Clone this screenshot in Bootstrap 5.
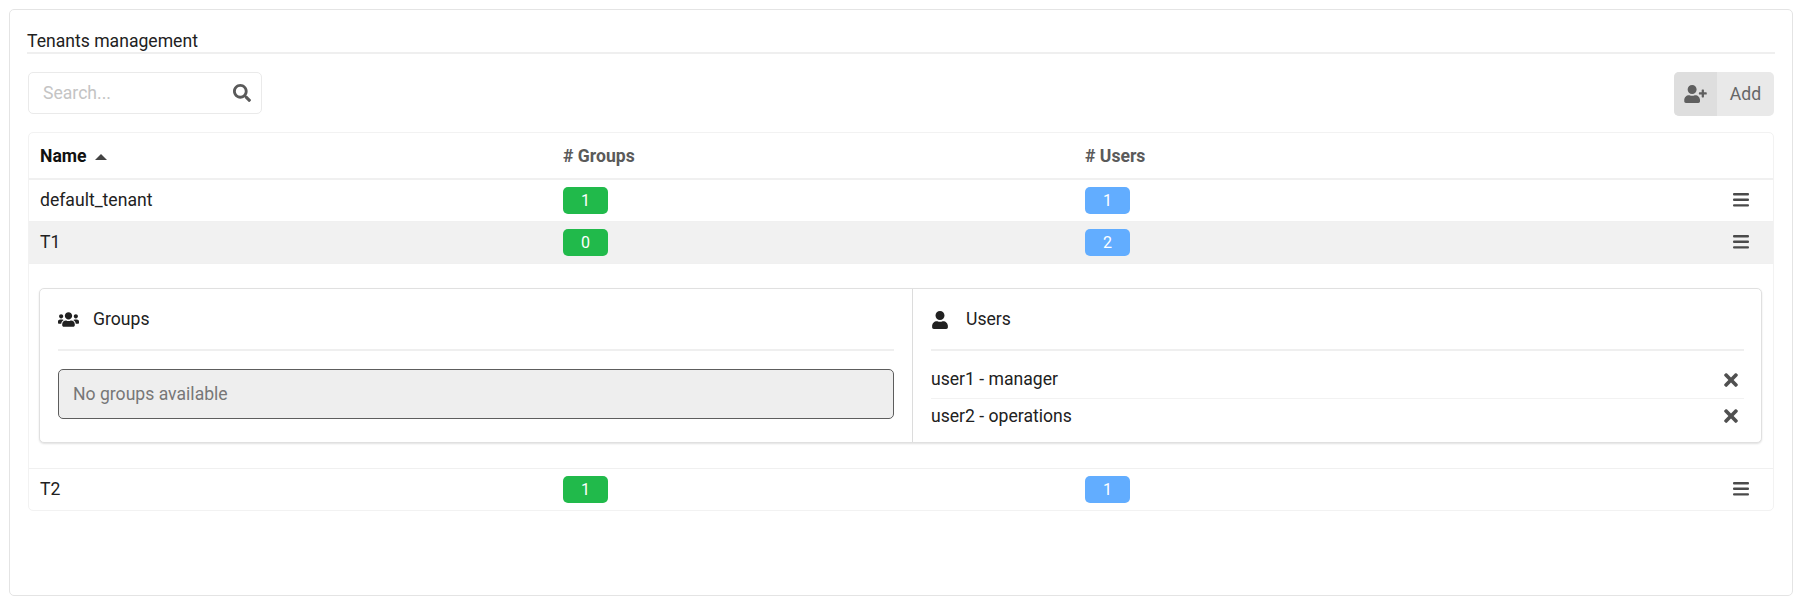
<!DOCTYPE html>
<html lang="en">
  <head>
    <meta charset="UTF-8" />
    <meta name="viewport" content="width=device-width, initial-scale=1.0" />
    <title>Tenants management</title>
    <link
      href="https://cdn.jsdelivr.net/npm/bootstrap@5.3.0/dist/css/bootstrap.min.css"
      rel="stylesheet"
    />
    <style>
      body {
        font-family: Roboto, "Liberation Sans", sans-serif;
        font-size: 17.6px;
        color: #212121;
        background-color: #fff;
      }
      .page-box {
        margin: 9px 8px 0 9px;
        height: 587px;
        padding: 19px 17px 0 17px;
        border: 1px solid #e4e4e4;
        border-radius: 5px;
      }
      .page-title {
        height: 25px;
        line-height: 24px;
        border-bottom: 2px solid #efefef;
      }
      .tools-row {
        margin: 18px 1px 16px 1px;
      }
      .search-box {
        width: 234px;
        height: 42px;
        border: 1px solid #eaeaea;
        border-radius: 5px;
        padding: 0 10px 0 14px;
      }
      .search-box input {
        border: 0;
        outline: 0;
        padding: 0;
        width: 0;
        min-width: 0;
        color: #212121;
      }
      .search-box input::placeholder {
        color: #c4c4c4;
        opacity: 1;
      }
      .search-box svg {
        width: 18px;
        height: 18px;
        flex-shrink: 0;
        fill: #5a5a5a;
      }
      .add-btn {
        height: 44px;
        width: 100px;
        background: #e9e9e9;
        border-radius: 5px;
        overflow: hidden;
        color: #666;
      }
      .add-icon {
        width: 43px;
        height: 100%;
        background: #dedede;
      }
      .add-icon svg {
        width: 23px;
        height: 18px;
        fill: #5f5f5f;
      }
      .tenant-frame {
        margin: 0 1px;
        border: 1px solid #f2f2f2;
        border-radius: 5px;
        overflow: hidden;
      }
      .tenant-table {
        table-layout: fixed;
        margin: 0;
        color: #212121;
      }
      .tenant-table th,
      .tenant-table td {
        padding: 0 0 0 11px;
        height: 42px;
        vertical-align: middle;
        border-bottom: 1px solid #f0f0f0;
        font-weight: 400;
      }
      .tenant-table th {
        height: 46px;
        padding-top: 2px;
        font-weight: 700;
        color: #5a5a5a;
        border-bottom-width: 2px;
      }
      .tenant-table th.sorted {
        color: #111;
      }
      .name-col {
        width: 523px;
      }
      .groups-col {
        width: 522px;
      }
      .menu-cell {
        width: 76px;
      }
      .tenant-table tr.open-row td {
        background: #f1f1f1;
        box-shadow: none;
      }
      .tenant-table tr:last-child td {
        border-bottom: 0;
      }
      .sort-mark {
        display: inline-block;
        margin-left: 4px;
        vertical-align: 2px;
        border-left: 6px solid transparent;
        border-right: 6px solid transparent;
        border-bottom: 6px solid #444;
      }
      .count-pill {
        display: block;
        width: 45px;
        height: 27px;
        line-height: 27px;
        border-radius: 5px;
        text-align: center;
        color: #fff;
        font-size: 16px;
      }
      .pill-green {
        background: #21ba4b;
      }
      .pill-blue {
        background: #62adff;
      }
      .menu-icon {
        display: block;
        width: 16px;
        height: 14px;
        margin-left: 25px;
        fill: #4a4a4a;
      }
      .tenant-table td.detail-cell {
        height: 204px;
        padding: 24px 11px 25px 10px;
      }
      .detail-card {
        border: 1px solid #e0e0e0;
        border-radius: 5px;
        box-shadow: 0 1px 2px rgba(0, 0, 0, 0.12);
        height: 155px;
      }
      .detail-side {
        flex: 1 1 0;
        min-width: 0;
        padding: 0 18px;
      }
      .detail-side.left-side {
        flex: 0 0 872px;
      }
      .detail-side + .detail-side {
        border-left: 1px solid #dcdcdc;
        padding: 0 17px 0 18px;
      }
      .detail-head {
        height: 62px;
        padding-top: 2px;
        border-bottom: 2px solid #efefef;
        margin-bottom: 18px;
      }
      .head-icon {
        width: 21px;
        height: 17px;
        margin-right: 14px;
        fill: #212121;
      }
      .user-icon {
        width: 18px;
        height: 18px;
        margin-right: 17px;
      }
      .empty-note {
        height: 50px;
        line-height: 48px;
        padding-left: 14px;
        background: #eeeeee;
        border: 1px solid #5d5d5d;
        border-radius: 5px;
        color: #777;
      }
      .user-line {
        height: 36px;
        margin-top: -7px;
      }
      .user-line + .user-line {
        margin-top: 0;
        border-top: 1px solid #f2f2f2;
      }
      .remove-icon {
        width: 14px;
        height: 20px;
        margin-right: 6px;
        fill: #505050;
      }
    </style>
  </head>
  <body>
    <div class="page-box">
      <div class="page-title">Tenants management</div>

      <div class="tools-row d-flex justify-content-between align-items-start">
        <div class="search-box d-flex align-items-center bg-white">
          <input class="flex-grow-1" type="text" placeholder="Search..." />
          <svg viewBox="0 0 512 512"><path d="M505 442.7L405.3 343c-4.5-4.5-10.6-7-17-7H372c27.6-35.3 44-79.7 44-128C416 93.1 322.9 0 208 0S0 93.1 0 208s93.1 208 208 208c48.3 0 92.7-16.4 128-44v16.3c0 6.4 2.5 12.5 7 17l99.7 99.7c9.4 9.4 24.6 9.4 33.9 0l28.3-28.3c9.4-9.4 9.4-24.6.1-34zM208 336c-70.7 0-128-57.2-128-128 0-70.7 57.2-128 128-128 70.7 0 128 57.2 128 128 0 70.7-57.2 128-128 128z"/></svg>
        </div>
        <div class="add-btn d-flex align-items-center">
          <span class="add-icon d-flex align-items-center justify-content-center">
            <svg viewBox="0 0 640 512"><path d="M624 208h-64v-64c0-8.8-7.2-16-16-16h-32c-8.8 0-16 7.2-16 16v64h-64c-8.8 0-16 7.2-16 16v32c0 8.8 7.2 16 16 16h64v64c0 8.8 7.2 16 16 16h32c8.8 0 16-7.2 16-16v-64h64c8.8 0 16-7.2 16-16v-32c0-8.8-7.2-16-16-16zm-400 48c70.7 0 128-57.3 128-128S294.7 0 224 0 96 57.3 96 128s57.3 128 128 128zm89.6 32h-16.7c-22.2 10.2-46.9 16-72.9 16s-50.6-5.8-72.9-16h-16.7C60.2 288 0 348.2 0 422.4V464c0 26.5 21.5 48 48 48h352c26.5 0 48-21.5 48-48v-41.6c0-74.2-60.2-134.4-134.4-134.4z"/></svg>
          </span>
          <span class="flex-grow-1 text-center">Add</span>
        </div>
      </div>

      <div class="tenant-frame">
        <table class="table tenant-table">
          <thead>
            <tr>
              <th class="sorted name-col">Name <span class="sort-mark"></span></th>
              <th class="groups-col"># Groups</th>
              <th># Users</th>
              <th class="menu-cell"></th>
            </tr>
          </thead>
          <tbody>
            <tr>
              <td>default_tenant</td>
              <td><span class="count-pill pill-green">1</span></td>
              <td><span class="count-pill pill-blue">1</span></td>
              <td class="menu-cell"><svg class="menu-icon" viewBox="0 0 16 14"><rect y="0" width="16" height="2.4" rx="1"/><rect y="5.6" width="16" height="2.4" rx="1"/><rect y="11.2" width="16" height="2.4" rx="1"/></svg></td>
            </tr>
            <tr class="open-row">
              <td>T1</td>
              <td><span class="count-pill pill-green">0</span></td>
              <td><span class="count-pill pill-blue">2</span></td>
              <td class="menu-cell"><svg class="menu-icon" viewBox="0 0 16 14"><rect y="0" width="16" height="2.4" rx="1"/><rect y="5.6" width="16" height="2.4" rx="1"/><rect y="11.2" width="16" height="2.4" rx="1"/></svg></td>
            </tr>
            <tr>
              <td class="detail-cell" colspan="4">
                <div class="detail-card d-flex bg-white">
                  <div class="detail-side left-side">
                    <div class="detail-head d-flex align-items-center">
                      <svg class="head-icon" viewBox="0 0 640 512"><path d="M96 224c35.3 0 64-28.7 64-64s-28.7-64-64-64-64 28.7-64 64 28.7 64 64 64zm448 0c35.3 0 64-28.7 64-64s-28.7-64-64-64-64 28.7-64 64 28.7 64 64 64zm32 32h-64c-17.6 0-33.5 7.1-45.1 18.6 40.3 22.1 68.9 62 75.1 109.4h66c17.7 0 32-14.3 32-32v-32c0-35.3-28.7-64-64-64zm-256 0c61.9 0 112-50.1 112-112S381.9 32 320 32 208 82.1 208 144s50.1 112 112 112zm76.8 32h-8.3c-20.8 10-43.9 16-68.5 16s-47.6-6-68.5-16h-8.3C179.6 288 128 339.6 128 403.2V432c0 26.5 21.5 48 48 48h288c26.5 0 48-21.5 48-48v-28.8c0-63.6-51.6-115.2-115.2-115.2zm-223.7-13.4C161.5 263.1 145.6 256 128 256H64c-35.3 0-64 28.7-64 64v32c0 17.7 14.3 32 32 32h65.9c6.3-47.4 34.9-87.3 75.2-109.4z"/></svg>
                      <span>Groups</span>
                    </div>
                    <div class="empty-note">No groups available</div>
                  </div>
                  <div class="detail-side">
                    <div class="detail-head d-flex align-items-center">
                      <svg class="head-icon user-icon" viewBox="0 0 448 512"><path d="M224 256c70.7 0 128-57.3 128-128S294.7 0 224 0 96 57.3 96 128s57.3 128 128 128zm89.6 32h-16.7c-22.2 10.2-46.9 16-72.9 16s-50.6-5.8-72.9-16h-16.7C60.2 288 0 348.2 0 422.4V464c0 26.5 21.5 48 48 48h352c26.5 0 48-21.5 48-48v-41.6c0-74.2-60.2-134.4-134.4-134.4z"/></svg>
                      <span>Users</span>
                    </div>
                    <div class="user-line d-flex justify-content-between align-items-center">
                      <span>user1 - manager</span>
                      <svg class="remove-icon" viewBox="0 0 352 512"><path d="M242.72 256l100.07-100.07c12.28-12.28 12.28-32.19 0-44.48l-22.24-22.24c-12.28-12.28-32.19-12.28-44.48 0L176 189.28 75.93 89.21c-12.28-12.28-32.19-12.28-44.48 0L9.21 111.45c-12.28 12.28-12.28 32.19 0 44.48L109.28 256 9.21 356.07c-12.28 12.28-12.28 32.19 0 44.48l22.24 22.24c12.28 12.28 32.2 12.28 44.48 0L176 322.72l100.07 100.07c12.28 12.28 32.2 12.28 44.48 0l22.24-22.24c12.28-12.28 12.28-32.19 0-44.48L242.72 256z"/></svg>
                    </div>
                    <div class="user-line d-flex justify-content-between align-items-center">
                      <span>user2 - operations</span>
                      <svg class="remove-icon" viewBox="0 0 352 512"><path d="M242.72 256l100.07-100.07c12.28-12.28 12.28-32.19 0-44.48l-22.24-22.24c-12.28-12.28-32.19-12.28-44.48 0L176 189.28 75.93 89.21c-12.28-12.28-32.19-12.28-44.48 0L9.21 111.45c-12.28 12.28-12.28 32.19 0 44.48L109.28 256 9.21 356.07c-12.28 12.28-12.28 32.19 0 44.48l22.24 22.24c12.28 12.28 32.2 12.28 44.48 0L176 322.72l100.07 100.07c12.28 12.28 32.2 12.28 44.48 0l22.24-22.24c12.28-12.28 12.28-32.19 0-44.48L242.72 256z"/></svg>
                    </div>
                  </div>
                </div>
              </td>
            </tr>
            <tr>
              <td>T2</td>
              <td><span class="count-pill pill-green">1</span></td>
              <td><span class="count-pill pill-blue">1</span></td>
              <td class="menu-cell"><svg class="menu-icon" viewBox="0 0 16 14"><rect y="0" width="16" height="2.4" rx="1"/><rect y="5.6" width="16" height="2.4" rx="1"/><rect y="11.2" width="16" height="2.4" rx="1"/></svg></td>
            </tr>
          </tbody>
        </table>
      </div>
    </div>

    <script src="https://cdn.jsdelivr.net/npm/bootstrap@5.3.0/dist/js/bootstrap.bundle.min.js"></script>
  </body>
</html>
